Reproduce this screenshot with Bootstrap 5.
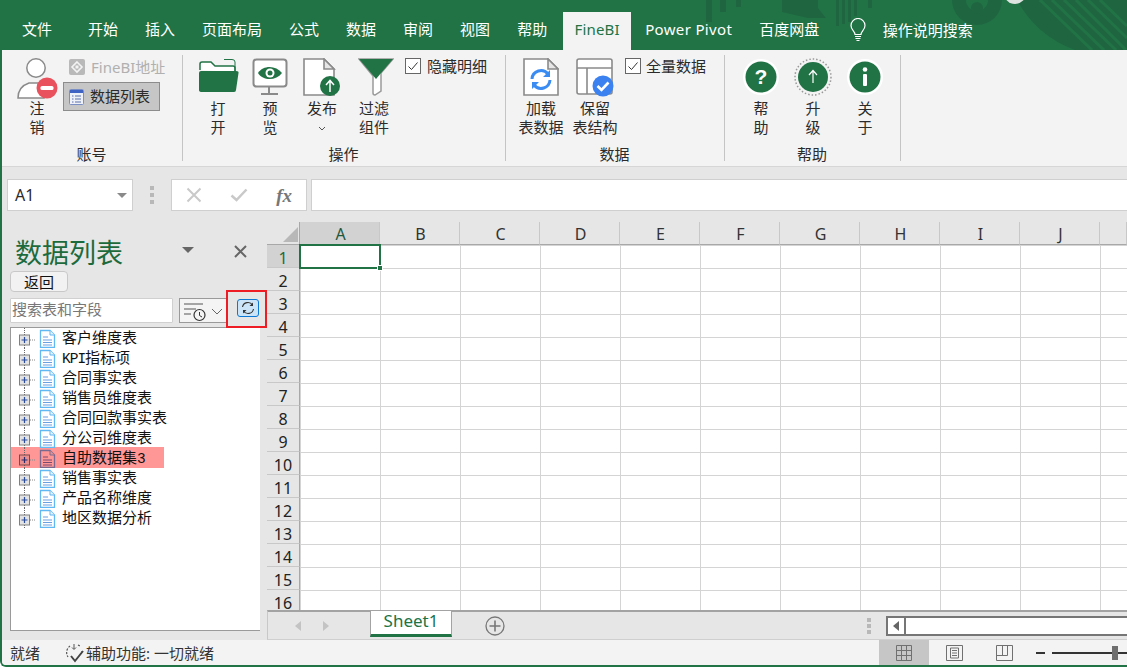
<!DOCTYPE html>
<html lang="zh-CN">
<head>
<meta charset="utf-8">
<title>FineBI</title>
<link href="https://cdn.jsdelivr.net/npm/bootstrap@5.3.0/dist/css/bootstrap.min.css" rel="stylesheet">
<style>
html,body{margin:0;height:667px;overflow:hidden;background:#fff}
body{font-family:"Noto Sans","Noto Sans CJK SC",sans-serif;font-size:15px;color:#2b2b2b}
svg{display:block;flex:none}
.xl-app{width:1127px;height:667px;border-left:2px solid #217346;border-bottom:2px solid #217346;border-bottom-left-radius:6px;overflow:hidden;background:#e6e6e6}
.tabbar{height:50px;background:#217346;padding:12px 0 0 6.5px;color:#fff;line-height:35px;flex:none}
.tabdeco{position:absolute;left:-2px;top:0;pointer-events:none}
.tabitem{padding:0 13.5px;height:38px;white-space:nowrap;position:relative;flex:none}
.tabfirst{margin-right:9px}
.tabactive{background:#f3f3f3;color:#217346;width:68px;padding:0;text-align:center;margin:0 0 0 2.500px;letter-spacing:.2px}
.tabwide{padding-left:14px;letter-spacing:.35px}
.tabbulb{margin:6px 17px 0 17px;position:relative}
.tabsearch{position:relative;white-space:nowrap;line-height:36px}
.ribbon{height:117px;background:#f3f3f3;border-bottom:1px solid #d6d6d6;padding-top:5px;flex:none}
.rgrp{height:106px;padding-top:3px;border-right:1px solid #c4c4c4;flex:none}
.g1{width:181px;padding-left:9px}.g2{width:323px;padding-left:9px;margin-left:0}.g3{width:219px;padding-left:8px}.g4{width:176px;padding-left:10px}
.rbody{height:88px}
.rlabel{line-height:16px;text-align:center;margin-left:-10px}
.g3 .rlabel{margin-left:-9px}.g4 .rlabel{margin-left:-11px}
.bigbtn{width:52px;text-align:center;line-height:19px;flex:none}
.g3 .bigbtn{width:54px}
.bigico{height:41px;display:flex;justify-content:center;align-items:flex-start;margin-bottom:0}
.chk{width:16px;height:16px;border:1px solid #666;background:#fff;flex:none;display:flex;align-items:center;justify-content:center}
.chkrow{gap:6px;line-height:16px;height:18px;white-space:nowrap;margin-left:5px}
.chkrow2{margin-left:3px;gap:5px}
.smallcol{width:97px;flex:none;margin-left:0}
.fineaddr{height:18px;color:#b0b0b0;gap:6px;padding-left:6px;margin-bottom:6px;line-height:18px;white-space:nowrap}
.listbtn{height:29px;background:#c6c6c6;border:1px solid #8c8c8c;padding-left:5px;gap:6px;line-height:27px;white-space:nowrap}
.fbar{height:55px;padding:12px 0 0 5px;background:#e6e6e6;flex:none}
.namebox{width:126px;height:32px;background:#fff;border:1px solid #cfcfcf;padding:0 5px 0 7px;font-size:16px}
.tri{width:0;height:0;border-left:5px solid transparent;border-right:5px solid transparent;border-top:5px solid #8a8a8a}
.griphdl{width:38px;gap:3px;height:32px}
.griphdl i{display:block;width:4px;height:4px;background:#b8b8b8}
.fxbtns{width:136px;height:32px;background:#fff;border:1px solid #cfcfcf;padding:0 14px}
.fxtxt{font-family:"Liberation Serif",serif;font-style:italic;font-weight:700;color:#777;font-size:19px;line-height:1}
.fxinput{flex:1 1 auto;height:32px;background:#fff;border:1px solid #cfcfcf;margin-left:4px;margin-right:-2px}
.pane{width:265px;height:418px;background:#e6e6e6;flex:none;padding-left:8px}
.panehead{height:49px;padding:13px 0 0 6px;width:257px}
.panetitle{font-size:27px;line-height:36px;color:#1d6b3c;width:166px;margin-left:-1px}
.panetri{width:0;height:0;border-left:6px solid transparent;border-right:6px solid transparent;border-top:6px solid #666;margin:12px 40px 0 1px}
.paneclose{margin-top:10px}
.backbtn{width:58px;height:21px;background:#f2f2f2;border:1px solid #c8c8c8;border-radius:4px;text-align:center;line-height:18px;font-size:15px;color:#111;padding:0}
.searchrow{margin-top:6px;height:25px;width:250px}
.searchbox{width:163px;height:25px;background:#fff;border:1px solid #d0d0d0;padding:0 1px;line-height:20px;color:#777;border-radius:1px}
.sortbox{width:48px;height:25px;margin-left:6px;background:#f4f4f4;border:1px solid #9a9a9a;padding-left:2px}
.refbtn{width:22px;height:18px;background:#cce4f7;border:1px solid #0a78d4;border-radius:3px;margin-left:10px;margin-top:1px;padding:0;display:flex;align-items:center;justify-content:center}
.redmark{position:absolute;left:216px;top:-8px;width:41px;height:38px;border:2px solid #ee1c25;pointer-events:none}
.treelist{width:250px;height:304px;margin-top:4px;background:#fff;border:1px solid #9a9a9a;border-right:0;padding:0;color:#111}
.treerow{height:20px;padding-left:7px;white-space:nowrap;width:153px}
.treerow>span{line-height:18px}
.treepick{background:#ff9797;box-shadow:0 -1px 0 #ff9797}
.monoL{font-family:"Liberation Mono",monospace;font-size:14.5px;letter-spacing:-1px}
.sheetcol{width:860px;flex:none}
.sheet{height:388px;background:#fff;display:grid;grid-template-columns:33px repeat(10,80px) 27px;grid-auto-rows:23px;overflow:hidden;flex:none}
.colh{background:#e6e6e6;text-align:center;line-height:25px;font-size:16px;padding-left:2px;border-right:1px solid #c8c8c8;border-bottom:1px solid #a8a8a8;color:#333}
.colsel{background:#d2d2d2;color:#22573c}
.corner{background:#e6e6e6;border-right:1px solid #a8a8a8;border-bottom:1px solid #a8a8a8;padding:5px 0 0 16px}
.rowh{background:#e6e6e6;text-align:center;line-height:27px;font-size:16px;border-right:1px solid #a8a8a8;border-bottom:1px solid #c8c8c8;color:#222}
.rowsel{background:#d2d2d2;color:#1d6b3c}
.cells{grid-column:2/13;grid-row:2/18;background-color:#fff;background-image:linear-gradient(to right,transparent 79px,#d4d4d4 79px),linear-gradient(to bottom,transparent 22px,#d4d4d4 22px);background-size:80px 23px;background-position:1px 1px}
.a1cell{width:82px;height:25px;margin:-1px 0 0 -1px;border:2px solid #217346;position:relative}
.a1grip{position:absolute;right:-4px;bottom:-4px;background:#217346;border:1px solid #fff;box-sizing:content-box;width:4px;height:4px}
.sheettabs{height:30px;background:#e6e6e6;border-top:2px solid #a3a3a3;border-bottom:1px solid #cfcfcf;border-left:1px solid #c8c8c8;flex:none;padding-left:27px}
.navarr{width:0;height:0;border-top:5px solid transparent;border-bottom:5px solid transparent;flex:none}
.navl{border-right:6px solid #c3c3c3;margin-right:22px}.navr{border-left:6px solid #c3c3c3;margin-right:41px}
.sheettab{width:82px;height:26px;background:#fff;border-bottom:3px solid #217346;border-left:1px solid #a3a3a3;border-right:1px solid #a3a3a3;margin-top:-1px;text-align:center;color:#217346;line-height:20px;font-size:17px;flex:none}
.plusbtn{margin-left:33px;margin-right:362px}
.grip2{width:19px;gap:2px;flex:none}
.grip2 i{display:block;width:4px;height:4px;background:#b8b8b8}
.hscroll{width:241px;height:20px;background:#fff;border:2px solid #767676;border-right:0;flex:none}
.hleft{width:18px;height:16px;border-right:2px solid #767676;flex:none}
.hleftarr{border-right:6px solid #666}
.statusbar{height:25px;background:#f3f3f3;flex:none;padding-left:8px;font-size:15px;color:#333;line-height:24px;white-space:nowrap}
.stready{width:55px;flex:none}
.staccess{margin:0 665px 0 1px;width:128px;flex:none}
.viewbtn{width:50px;height:25px;flex:none}
.viewon{background:#c6c6c6}
.zoomlne{height:2px;background:#333;flex:none}
.zoomminus{width:9px;margin-left:7px}
.zoomtrack{width:60px;margin-left:7px}
.zoomrest{width:15px}
.thumb{width:6px;height:14px;background:#6e6e6e;flex:none}
</style>
</head>
<body>
<svg width="0" height="0" class="position-absolute">
  <defs>
    <symbol id="tree" viewBox="0 0 44 20">
      <path d="M6.5 0V7M6.5 17V20" stroke="#666" stroke-width="1" stroke-dasharray="1 1" fill="none"/>
      <path d="M12 12H18" stroke="#888" stroke-width="1" stroke-dasharray="1 1" fill="none"/>
      <rect x="1.5" y="7" width="10" height="10" fill="#e3e3e3" stroke="#808080"/>
      <path d="M3.5 12H9.5M6.5 9V15" stroke="#2a4a9a" stroke-width="1.2"/>
      <path d="M22.5 2.5H32L36.5 7V19.500H22.500Z" fill="#fff" stroke="#62b8f2" stroke-width="1.300"/>
      <path d="M32 2.5V7H36.5" fill="#e8f4fd" stroke="#62b8f2" stroke-width="1"/>
      <path d="M25 9H30M25 12H34M25 14.500H34M25 17H34" stroke="#6a9fe0" stroke-width="1"/>
    </symbol>
    <symbol id="treep" viewBox="0 0 44 20">
      <path d="M6.5 0V7M6.5 17V20" stroke="#666" stroke-width="1" stroke-dasharray="1 1" fill="none"/>
      <path d="M12 12H18" stroke="#888" stroke-width="1" stroke-dasharray="1 1" fill="none"/>
      <rect x="1.5" y="7" width="10" height="10" fill="#e89090" stroke="#804848"/>
      <path d="M3.5 12H9.5M6.5 9V15" stroke="#2a2a6a" stroke-width="1.2"/>
      <path d="M22.5 2.5H32L36.5 7V19.500H22.500Z" fill="#ff9797" stroke="#7a6a90" stroke-width="1.300"/>
      <path d="M32 2.5V7H36.5" fill="#e89090" stroke="#7a6a90" stroke-width="1"/>
      <path d="M25 9H30M25 12H34M25 14.500H34M25 17H34" stroke="#7a4a70" stroke-width="1"/>
    </symbol>
    <symbol id="tick" viewBox="0 0 14 14"><path d="M2.500 7.500L5.500 10.500L11.500 3.500" fill="none" stroke="#333" stroke-width="1"/></symbol>
  </defs>
</svg>
<div class="xl-app d-flex flex-column position-relative">
  <div class="tabbar d-flex position-relative">
    <svg class="tabdeco" width="1127" height="50" viewBox="0 0 1127 50">
      <g fill="#1f6640">
        <rect x="706" y="0" width="6" height="22"/><rect x="720" y="0" width="6" height="12"/><rect x="736" y="0" width="5" height="7"/>
        <path d="M782 0H818V8L826 18H808L782 12Z"/>
        <rect x="836" y="0" width="3" height="26"/><rect x="842" y="0" width="3" height="24"/><rect x="848" y="0" width="3" height="22"/><rect x="854" y="0" width="3" height="16"/><rect x="868" y="0" width="4" height="8"/>
        <path d="M952 0A25 25 0 0 0 1002 0ZM1017 0A108 108 0 0 0 1075 50H1127V0Z" fill-rule="evenodd"/>
      </g>
      <path d="M966 0A11 11 0 0 0 988 0Z" fill="#217346"/>
      <circle cx="977" cy="8" r="6" fill="#1f6640"/>
      <g stroke="#217346" stroke-width="3" fill="none"><path d="M1040 0L1092 50M1052 0L1104 50M1064 0L1116 50M1076 0L1126 50M1088 0L1127 38M1100 0L1127 26"/></g>
      <circle cx="1015" cy="-7" r="11" fill="#dde3df"/>
    </svg>
    <div class="tabitem tabfirst">文件</div>
    <div class="tabitem">开始</div>
    <div class="tabitem">插入</div>
    <div class="tabitem">页面布局</div>
    <div class="tabitem">公式</div>
    <div class="tabitem">数据</div>
    <div class="tabitem">审阅</div>
    <div class="tabitem">视图</div>
    <div class="tabitem">帮助</div>
    <div class="tabitem tabactive">FineBI</div>
    <div class="tabitem tabwide">Power Pivot</div>
    <div class="tabitem">百度网盘</div>
    <svg class="tabbulb" width="16" height="24" viewBox="0 0 16 24"><path d="M5 16.500C5 13.500 1 12 1 7.500A7 7 0 0 1 15 7.500C15 12 11 13.500 11 16.500Z" fill="none" stroke="#fff" stroke-width="1.200"/><path d="M5 18.500H11M5.500 20.500H10.500M6.500 22.500H9.500" stroke="#fff" stroke-width="1.200"/></svg>
    <div class="tabsearch">操作说明搜索</div>
  </div>

  <div class="ribbon d-flex">
    <div class="rgrp g1">
      <div class="rbody d-flex">
        <div class="bigbtn">
          <div class="bigico">
            <svg width="46" height="44" viewBox="0 0 46 44"><circle cx="22" cy="10" r="9.200" fill="#fff" stroke="#8a8a8a" stroke-width="1.500"/><path d="M4 40C4 32 9 27 15 25H30V40Z" fill="#fff" stroke="#8a8a8a" stroke-width="1.500"/><circle cx="33" cy="30" r="10.500" fill="#e9525c"/><rect x="26.500" y="28" width="13" height="4" rx="1.500" fill="#fff"/></svg>
          </div>
          注<br>销
        </div>
        <div class="smallcol">
          <div class="fineaddr d-flex align-items-center">
            <svg width="16" height="16" viewBox="0 0 16 16"><rect width="16" height="16" rx="2" fill="#b9b9b9"/><path d="M8 3L13 8L8 13L3 8Z" fill="none" stroke="#f3f3f3" stroke-width="1.600"/><rect x="6.500" y="6.500" width="3" height="3" fill="#f3f3f3"/></svg>
            <span>FineBI地址</span>
          </div>
          <div class="listbtn d-flex align-items-center">
            <svg width="15" height="16" viewBox="0 0 15 16"><rect x=".5" y=".5" width="14" height="15" rx="1" fill="#eef1f8" stroke="#7a8fc4"/><rect x="1" y="1" width="13" height="3" fill="#3e63c4"/><path d="M3 7H4.500M6 7H12M3 10H4.500M6 10H12M3 13H4.500M6 13H12" stroke="#5a6ea8"/></svg>
            <span>数据列表</span>
          </div>
        </div>
      </div>
      <div class="rlabel">账号</div>
    </div>

    <div class="rgrp g2">
      <div class="rbody d-flex">
        <div class="bigbtn">
          <div class="bigico">
            <svg width="41" height="36" viewBox="0 0 41 36"><path d="M2 12V6Q2 4 4 4H13L17 8H35Q37 8 37 10V14" fill="#fff" stroke="#217346" stroke-width="1.500"/><path d="M26 1.500H34Q37 1.500 37 4V14" fill="none" stroke="#217346" stroke-width="1"/><path d="M1 15Q1 13 3 13H38Q41 13 40.500 15L38 32Q38 34 36 34H4Q1 34 1 32Z" fill="#217346"/></svg>
          </div>
          打<br>开
        </div>
        <div class="bigbtn">
          <div class="bigico">
            <svg width="36" height="38" viewBox="0 0 36 38"><rect x="1.500" y="1.500" width="33" height="27" rx="3" fill="#fff" stroke="#8a8a8a" stroke-width="2"/><path d="M17 29V35M9 36H26" stroke="#8a8a8a" stroke-width="2"/><path d="M6 15C11 7 24 7 30 15C24 23 11 23 6 15Z" fill="#217346"/><circle cx="18" cy="15" r="4.500" fill="#fff"/><circle cx="18" cy="15" r="2.500" fill="#217346"/></svg>
          </div>
          预<br>览
        </div>
        <div class="bigbtn">
          <div class="bigico">
            <svg width="38" height="39" viewBox="0 0 38 39"><path d="M1 1H21L31 11V37H1Z" fill="#fff" stroke="#8a8a8a" stroke-width="1.600"/><path d="M21 1V11H31Z" fill="#e6e6e6" stroke="#8a8a8a" stroke-width="1.600"/><circle cx="27" cy="28" r="10" fill="#217346"/><path d="M27 34V23M23 27L27 22.500L31 27" fill="none" stroke="#fff" stroke-width="1.500"/></svg>
          </div>
          发布<br>
          <svg class="mx-auto mt-2" width="8" height="5" viewBox="0 0 8 5"><path d="M1 1L4 4L7 1" fill="none" stroke="#555" stroke-width="1"/></svg>
        </div>
        <div class="bigbtn">
          <div class="bigico">
            <svg class="ms-1" width="36" height="38" viewBox="0 0 36 38"><path d="M1 1H35L23 15V33L17 37Q15 37 15 35V18Z" fill="#fff" stroke="#9a9a9a" stroke-width="1.500"/><path d="M1 1H35L18 21Z" fill="#217346"/></svg>
          </div>
          过滤<br>组件
        </div>
        <div class="chkrow d-flex">
          <span class="chk"><svg width="14" height="14"><use href="#tick"/></svg></span><span>隐藏明细</span>
        </div>
      </div>
      <div class="rlabel">操作</div>
    </div>

    <div class="rgrp g3">
      <div class="rbody d-flex">
        <div class="bigbtn">
          <div class="bigico">
            <svg width="36" height="38" viewBox="0 0 36 38"><path d="M1 1H25L35 11V37H1Z" fill="#fff" stroke="#8a8a8a" stroke-width="1.600"/><path d="M25 1V11H35Z" fill="#e6e6e6" stroke="#8a8a8a" stroke-width="1.600"/><path d="M9 21A9 9 0 0 1 25 16M27 22A9 9 0 0 1 11 27" fill="none" stroke="#3b8cf2" stroke-width="3"/><path d="M27 12V19H20ZM9 31V24H16Z" fill="#3b8cf2"/></svg>
          </div>
          加载<br>表数据
        </div>
        <div class="bigbtn">
          <div class="bigico">
            <svg width="38" height="39" viewBox="0 0 38 39"><rect x="1" y="1" width="35" height="35" rx="2" fill="#fff" stroke="#8a8a8a" stroke-width="1.600"/><path d="M1 10H36M11 10V36" stroke="#8a8a8a" stroke-width="1.600"/><circle cx="27" cy="28" r="10.500" fill="#3b82f0"/><path d="M21.500 28L25.500 32L32.500 24.500" fill="none" stroke="#fff" stroke-width="2.600"/></svg>
          </div>
          保留<br>表结构
        </div>
        <div class="chkrow chkrow2 d-flex">
          <span class="chk"><svg width="14" height="14"><use href="#tick"/></svg></span><span>全量数据</span>
        </div>
      </div>
      <div class="rlabel">数据</div>
    </div>

    <div class="rgrp g4">
      <div class="rbody d-flex">
        <div class="bigbtn">
          <div class="bigico">
            <svg width="36" height="38" viewBox="0 0 36 38"><circle cx="18" cy="19" r="18" fill="#fff"/><circle cx="18" cy="19" r="15.500" fill="#217346"/><text x="18" y="26" text-anchor="middle" font-family="Liberation Sans" font-weight="700" font-size="21" fill="#fff">?</text></svg>
          </div>
          帮<br>助
        </div>
        <div class="bigbtn">
          <div class="bigico">
            <svg width="38" height="38" viewBox="0 0 38 38"><circle cx="19" cy="19" r="18" fill="#f3f3f3" stroke="#999" stroke-width="1.500" stroke-dasharray="1.500 2"/><circle cx="19" cy="19" r="15" fill="#217346"/><path d="M19 25V13M15 17L19 12.500L23 17" fill="none" stroke="#fff" stroke-width="1.200"/></svg>
          </div>
          升<br>级
        </div>
        <div class="bigbtn">
          <div class="bigico">
            <svg width="36" height="38" viewBox="0 0 36 38"><circle cx="18" cy="19" r="18" fill="#fff"/><circle cx="18" cy="19" r="15.500" fill="#217346"/><rect x="16" y="16" width="4" height="12" rx="1" fill="#fff"/><circle cx="18" cy="11.500" r="2.300" fill="#fff"/></svg>
          </div>
          关<br>于
        </div>
      </div>
      <div class="rlabel">帮助</div>
    </div>
  </div>

  <div class="fbar d-flex">
    <div class="namebox d-flex align-items-center justify-content-between"><span>A1</span><span class="tri"></span></div>
    <div class="griphdl d-flex flex-column align-items-center justify-content-center"><i></i><i></i><i></i></div>
    <div class="fxbtns d-flex align-items-center justify-content-between">
      <svg width="16" height="16" viewBox="0 0 16 16"><path d="M1.500 1.500L14.500 14.500M14.500 1.500L1.500 14.500" stroke="#c9c9c9" stroke-width="2"/></svg>
      <svg width="18" height="14" viewBox="0 0 18 14"><path d="M1.500 7.500L6.500 12L16.500 1.500" fill="none" stroke="#c9c9c9" stroke-width="2.500"/></svg>
      <span class="fxtxt">fx</span>
    </div>
    <div class="fxinput"></div>
  </div>

  <div class="d-flex flex-grow-1">
    <div class="pane">
      <div class="panehead d-flex align-items-start">
        <div class="panetitle">数据列表</div>
        <div class="panetri"></div>
        <svg class="paneclose" width="13" height="13" viewBox="0 0 13 13"><path d="M1 1L12 12M12 1L1 12" stroke="#666" stroke-width="2"/></svg>
      </div>
      <button type="button" class="backbtn d-block">返回</button>
      <div class="searchrow d-flex position-relative">
        <div class="searchbox">搜索表和字段</div>
        <div class="sortbox d-flex align-items-center">
          <svg width="44" height="23" viewBox="0 0 44 23"><path d="M2 5H21M2 10H14M2 15H9" stroke="#555" stroke-width="1.200"/><circle cx="17.500" cy="16" r="5.500" fill="#f4f4f4" stroke="#333" stroke-width="1.200"/><path d="M17.500 13V16.500L20 18" fill="none" stroke="#333"/><path d="M30 10L35 15L40 10" fill="none" stroke="#666"/></svg>
        </div>
        <button type="button" class="refbtn" aria-label="刷新">
          <svg width="14" height="14" viewBox="0 0 14 14"><path d="M1.500 6A5.500 5.500 0 0 1 11.500 4M12.500 8A5.500 5.500 0 0 1 2.500 10" fill="none" stroke="#333" stroke-width="1.100"/><path d="M12 1.500V5H8.500ZM2 12.500V9H5.500Z" fill="#333"/></svg>
        </button>
        <div class="redmark"></div>
      </div>
      <div class="treelist">
        <div class="treerow d-flex"><svg width="44" height="20"><use href="#tree"/></svg><span>客户维度表</span></div>
        <div class="treerow d-flex"><svg width="44" height="20"><use href="#tree"/></svg><span><span class="monoL">KPI</span>指标项</span></div>
        <div class="treerow d-flex"><svg width="44" height="20"><use href="#tree"/></svg><span>合同事实表</span></div>
        <div class="treerow d-flex"><svg width="44" height="20"><use href="#tree"/></svg><span>销售员维度表</span></div>
        <div class="treerow d-flex"><svg width="44" height="20"><use href="#tree"/></svg><span>合同回款事实表</span></div>
        <div class="treerow d-flex"><svg width="44" height="20"><use href="#tree"/></svg><span>分公司维度表</span></div>
        <div class="treerow treepick d-flex"><svg width="44" height="20"><use href="#treep"/></svg><span>自助数据集<span class="monoL">3</span></span></div>
        <div class="treerow d-flex"><svg width="44" height="20"><use href="#tree"/></svg><span>销售事实表</span></div>
        <div class="treerow d-flex"><svg width="44" height="20"><use href="#tree"/></svg><span>产品名称维度</span></div>
        <div class="treerow d-flex"><svg width="44" height="20"><use href="#tree"/></svg><span>地区数据分析</span></div>
      </div>
    </div>

    <div class="sheetcol d-flex flex-column">
      <div class="sheet">
        <div class="corner"><svg width="15" height="15" viewBox="0 0 15 15"><path d="M15 0V15H0Z" fill="#b8b8b8"/></svg></div>
        <div class="colh colsel">A</div><div class="colh">B</div><div class="colh">C</div><div class="colh">D</div><div class="colh">E</div><div class="colh">F</div><div class="colh">G</div><div class="colh">H</div><div class="colh">I</div><div class="colh">J</div><div class="colh"></div>
        <div class="rowh rowsel">1</div>
        <div class="cells"><div class="a1cell"><span class="a1grip"></span></div></div>
        <div class="rowh">2</div><div class="rowh">3</div><div class="rowh">4</div><div class="rowh">5</div><div class="rowh">6</div><div class="rowh">7</div><div class="rowh">8</div><div class="rowh">9</div><div class="rowh">10</div><div class="rowh">11</div><div class="rowh">12</div><div class="rowh">13</div><div class="rowh">14</div><div class="rowh">15</div><div class="rowh">16</div>
      </div>
      <div class="sheettabs d-flex align-items-center">
        <span class="navarr navl"></span><span class="navarr navr"></span>
        <div class="sheettab align-self-start">Sheet1</div>
        <svg class="plusbtn" width="20" height="20" viewBox="0 0 20 20"><circle cx="10" cy="10" r="9" fill="none" stroke="#777" stroke-width="1.300"/><path d="M10 4.500V15.500M4.500 10H15.500" stroke="#777" stroke-width="1.600"/></svg>
        <div class="grip2 d-flex flex-column"><i></i><i></i><i></i></div>
        <div class="hscroll d-flex">
          <div class="hleft d-flex align-items-center justify-content-center"><span class="navarr hleftarr"></span></div>
        </div>
      </div>
    </div>
  </div>

  <div class="statusbar d-flex align-items-center">
    <span class="stready">就绪</span>
    <svg width="20" height="20" viewBox="0 0 20 20"><path d="M5 3A8 8 0 0 0 3 14M13 2L15 3M17 8V9" fill="none" stroke="#555" stroke-dasharray="2 1.500" stroke-width="1.200"/><path d="M9 1V6M7 4.500L9 6.500L11 4.500" fill="none" stroke="#555"/><path d="M6 13L10 18L18 8" fill="none" stroke="#444" stroke-width="2"/></svg>
    <span class="staccess">辅助功能: 一切就绪</span>
    <div class="viewbtn viewon d-flex align-items-center justify-content-center">
      <svg width="16" height="16" viewBox="0 0 16 16"><path d="M.5 .5H15.500V15.500H.5ZM5.500 .5V15.500M10.500 .5V15.500M.5 5.500H15.500M.5 10.500H15.500" fill="none" stroke="#707070"/></svg>
    </div>
    <div class="viewbtn d-flex align-items-center justify-content-center">
      <svg width="17" height="16" viewBox="0 0 17 16"><path d="M.5 .5H16.500V15.500H.5ZM4.500 3H12.500V13H4.500ZM6 5.500H11M6 8H11M6 10.500H11" fill="none" stroke="#707070"/></svg>
    </div>
    <div class="viewbtn d-flex align-items-center justify-content-center">
      <svg width="17" height="16" viewBox="0 0 17 16"><path d="M.5 .5H16.500V15.500H.5ZM.5 10.500H11.500V.5M6.500 .5V10.500" fill="none" stroke="#707070"/></svg>
    </div>
    <div class="zoomlne zoomminus"></div>
    <div class="zoomlne zoomtrack"></div>
    <div class="thumb"></div>
    <div class="zoomlne zoomrest"></div>
  </div>
</div>
</body>
</html>
